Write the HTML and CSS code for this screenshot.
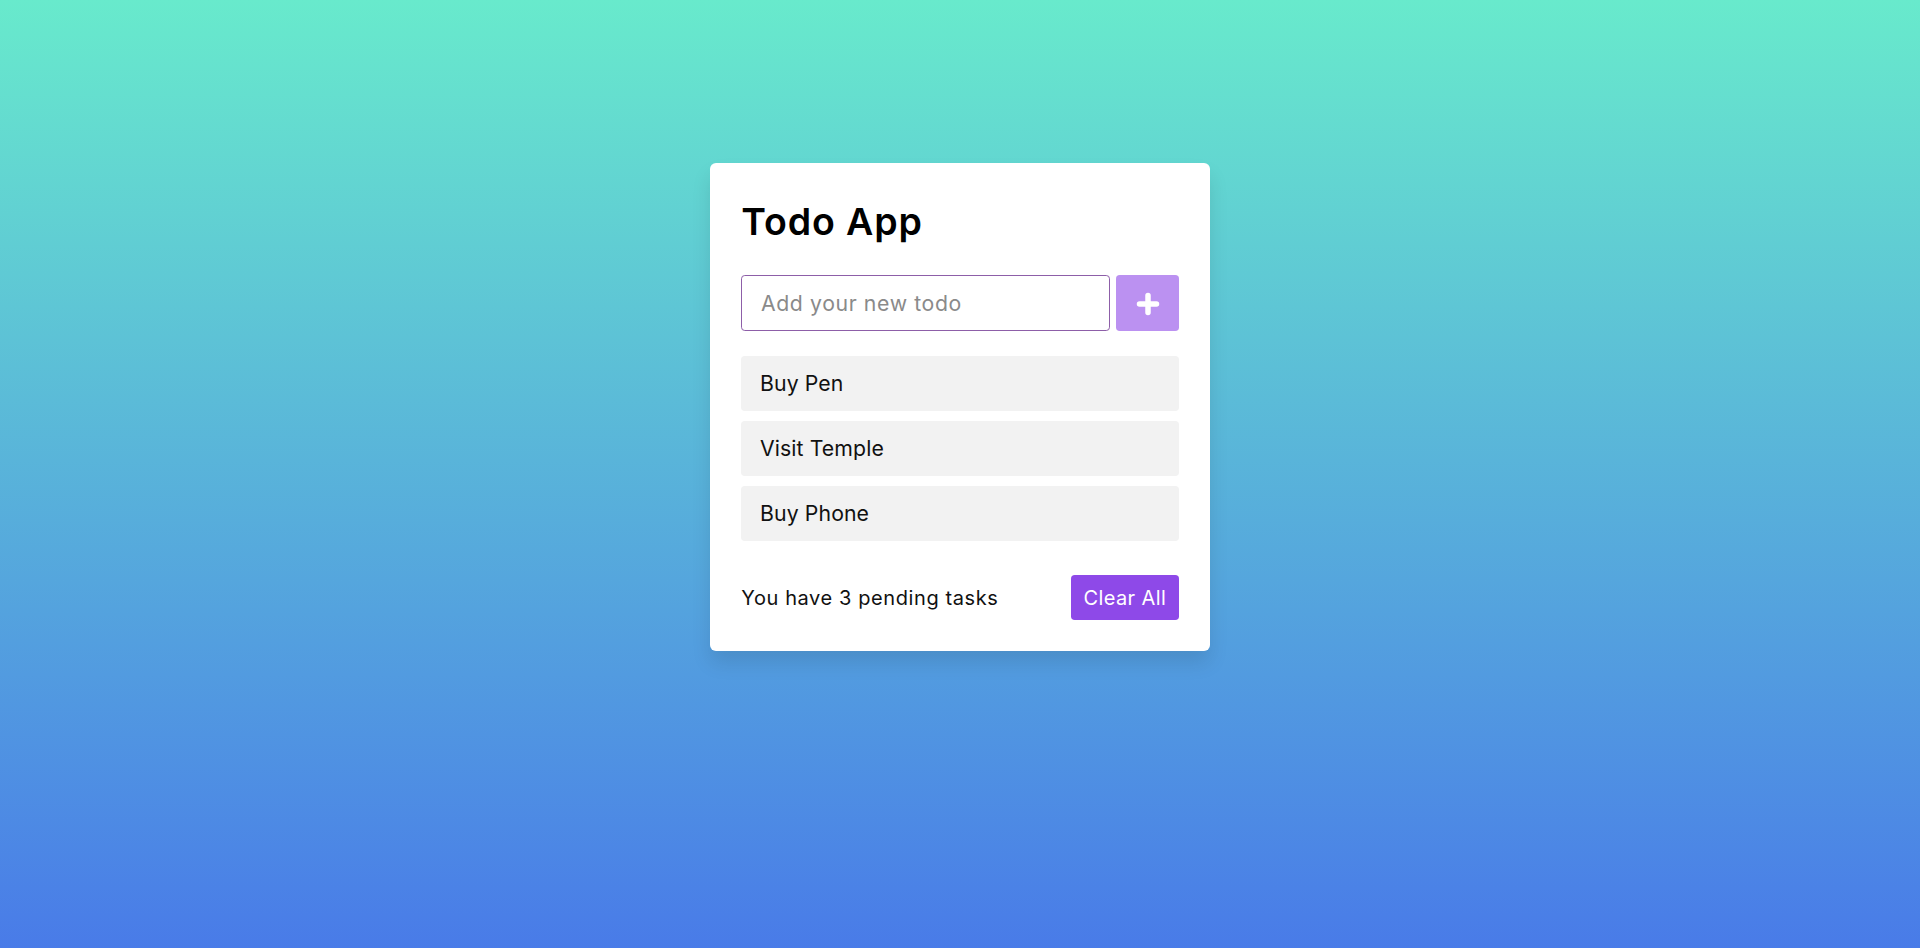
FILE: index.html
```html
<!DOCTYPE html>
<html lang="en">
<head>
<meta charset="utf-8">
<title>Todo App</title>
<link rel="stylesheet" href="styles.css">
</head>
<body>
  <div class="wrapper">
    <header class="title">Todo App</header>
    <div class="input-field">
      <input type="text" class="todo-input" placeholder="Add your new todo" autofocus>
      <button class="add-btn" aria-label="Add">
        <svg class="plus" width="24" height="24" viewBox="0 0 24 24"><path d="M12 3.5v17M3.5 12h17" stroke="#fff" stroke-width="5.5" stroke-linecap="round"/></svg>
      </button>
    </div>
    <ul class="todo-list">
      <li class="todo-item">Buy Pen</li>
      <li class="todo-item">Visit Temple</li>
      <li class="todo-item">Buy Phone</li>
    </ul>
    <div class="footer">
      <span class="pending">You have 3 pending tasks</span>
      <button class="clear-btn">Clear All</button>
    </div>
  </div>
</body>
</html>
```

FILE: styles.css
```css
* {
  margin: 0;
  padding: 0;
  box-sizing: border-box;
}

html, body {
  height: 100%;
}

body {
  font-family: "Inter", "Open Sans", sans-serif;
  background: linear-gradient(to bottom, #68EACC 0%, #497BE8 100%);
  padding: 12.5px;
  color: #000;
}

.wrapper {
  background: #fff;
  width: 500px;
  margin: 150px auto 0;
  padding: 31.25px;
  border-radius: 6px;
  box-shadow: 0 12px 19px rgba(0, 0, 0, 0.1);
}

.title {
  font-size: 37.5px;
  font-weight: 600;
  line-height: 56px;
  letter-spacing: 0.9px;
}

.input-field {
  display: flex;
  gap: 6px;
  height: 56.25px;
  margin: 25px 0;
}

.todo-input {
  flex: 1;
  height: 100%;
  border: 1px solid #8d5ea8;
  border-radius: 3.75px;
  outline: none;
  padding-left: 18.75px;
  font-family: inherit;
  font-size: 21.25px;
  letter-spacing: 0.6px;
  color: #000;
  caret-color: #000;
}

.todo-input::placeholder {
  color: #8a8a8a;
}

.add-btn {
  width: 62.5px;
  height: 100%;
  border: none;
  border-radius: 3.75px;
  background: #8E49E8;
  opacity: 0.6;
  display: flex;
  align-items: center;
  justify-content: center;
}

.plus {
  margin-top: 3px;
}

.todo-list {
  list-style: none;
  display: flex;
  flex-direction: column;
  gap: 10px;
}

.todo-item {
  height: 55px;
  line-height: 55px;
  background: #f2f2f2;
  border-radius: 3.75px;
  padding: 0 18.75px;
  font-size: 21.25px;
  letter-spacing: 0.1px;
  color: #111;
}

.footer {
  display: flex;
  align-items: center;
  justify-content: space-between;
  margin-top: 34px;
}

.pending {
  font-size: 20px;
  letter-spacing: 0.6px;
  color: #111;
}

.clear-btn {
  height: 45px;
  padding: 0 12.5px;
  border: none;
  border-radius: 3.75px;
  background: #8E49E8;
  color: #fff;
  font-family: inherit;
  font-size: 20px;
  letter-spacing: 0.4px;
}
```
